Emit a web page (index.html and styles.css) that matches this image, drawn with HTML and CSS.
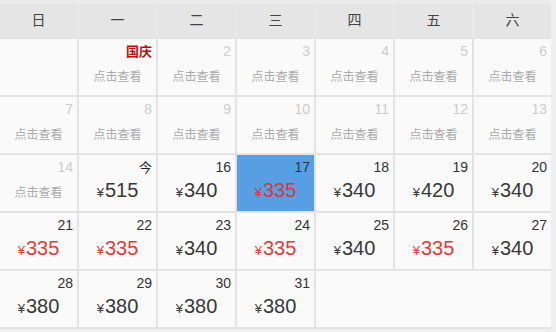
FILE: index.html
```html
<!DOCTYPE html>
<html lang="zh">
<head>
<meta charset="utf-8">
<link rel="stylesheet" href="styles.css">
</head>
<body>
<div class="cal">
  <div class="head">
    <div class="hd">日</div><div class="hd">一</div><div class="hd">二</div><div class="hd">三</div><div class="hd">四</div><div class="hd">五</div><div class="hd">六</div>
  </div>
  <div class="grid">
    <div class="cell empty"></div>
    <div class="cell off"><div class="d holiday">国庆</div><div class="v">点击查看</div></div>
    <div class="cell off"><div class="d">2</div><div class="v">点击查看</div></div>
    <div class="cell off"><div class="d">3</div><div class="v">点击查看</div></div>
    <div class="cell off"><div class="d">4</div><div class="v">点击查看</div></div>
    <div class="cell off"><div class="d">5</div><div class="v">点击查看</div></div>
    <div class="cell off"><div class="d">6</div><div class="v">点击查看</div></div>

    <div class="cell off"><div class="d">7</div><div class="v">点击查看</div></div>
    <div class="cell off"><div class="d">8</div><div class="v">点击查看</div></div>
    <div class="cell off"><div class="d">9</div><div class="v">点击查看</div></div>
    <div class="cell off"><div class="d">10</div><div class="v">点击查看</div></div>
    <div class="cell off"><div class="d">11</div><div class="v">点击查看</div></div>
    <div class="cell off"><div class="d">12</div><div class="v">点击查看</div></div>
    <div class="cell off"><div class="d">13</div><div class="v">点击查看</div></div>

    <div class="cell off"><div class="d">14</div><div class="v">点击查看</div></div>
    <div class="cell"><div class="d today">今</div><div class="p"><span class="y">¥</span>515</div></div>
    <div class="cell"><div class="d">16</div><div class="p"><span class="y">¥</span>340</div></div>
    <div class="cell sel"><div class="d">17</div><div class="p low"><span class="y">¥</span>335</div></div>
    <div class="cell"><div class="d">18</div><div class="p"><span class="y">¥</span>340</div></div>
    <div class="cell"><div class="d">19</div><div class="p"><span class="y">¥</span>420</div></div>
    <div class="cell"><div class="d">20</div><div class="p"><span class="y">¥</span>340</div></div>

    <div class="cell"><div class="d">21</div><div class="p low"><span class="y">¥</span>335</div></div>
    <div class="cell"><div class="d">22</div><div class="p low"><span class="y">¥</span>335</div></div>
    <div class="cell"><div class="d">23</div><div class="p"><span class="y">¥</span>340</div></div>
    <div class="cell"><div class="d">24</div><div class="p low"><span class="y">¥</span>335</div></div>
    <div class="cell"><div class="d">25</div><div class="p"><span class="y">¥</span>340</div></div>
    <div class="cell"><div class="d">26</div><div class="p low"><span class="y">¥</span>335</div></div>
    <div class="cell"><div class="d">27</div><div class="p"><span class="y">¥</span>340</div></div>

    <div class="cell"><div class="d">28</div><div class="p"><span class="y">¥</span>380</div></div>
    <div class="cell"><div class="d">29</div><div class="p"><span class="y">¥</span>380</div></div>
    <div class="cell"><div class="d">30</div><div class="p"><span class="y">¥</span>380</div></div>
    <div class="cell"><div class="d">31</div><div class="p"><span class="y">¥</span>380</div></div>
    <div class="cell blank wide"></div>
  </div>
</div>
</body>
</html>
```

FILE: styles.css
```css
html, body {
  margin: 0;
  padding: 0;
}
body {
  background: #efefef;
  font-family: "Liberation Sans", "Noto Sans CJK SC", sans-serif;
  width: 556px;
  height: 332px;
  overflow: hidden;
}
.cal {
  width: 551px;
  background: #e3e3e3;
  padding-bottom: 2px;
}
.head {
  display: grid;
  grid-template-columns: repeat(7, 77px);
  column-gap: 2px;
  height: 38px;
  background: #e8e8e8;
  border-top: 4px solid #ebebeb;
  box-sizing: border-box;
}
.hd {
  background: #e5e5e5;
  text-align: center;
  font-family: "Noto Sans CJK SC", sans-serif;
  font-size: 14px;
  line-height: 30px;
  color: #444;
}
.grid {
  display: grid;
  grid-template-columns: repeat(7, 77px);
  grid-auto-rows: 56px;
  gap: 2px;
  padding-top: 1px;
}
.cell {
  background: #fafafa;
  padding: 3px 4px 0 4px;
  box-sizing: border-box;
}
.wide {
  grid-column: span 3;
}
.d {
  text-align: right;
  font-size: 14px;
  line-height: 18px;
  color: #333;
}
.off .d {
  color: #ccc;
}
.d.holiday {
  color: #c20c0c;
  font-weight: bold;
  font-size: 13px;
  font-family: "Noto Sans CJK SC", sans-serif;
}
.d.today {
  font-size: 13px;
  font-family: "Noto Sans CJK SC", sans-serif;
  color: #222;
}
.v {
  margin-top: 8px;
  text-align: center;
  font-family: "Noto Sans CJK SC", sans-serif;
  font-size: 12px;
  line-height: 16px;
  color: #aaa;
}
.p {
  margin-top: 1px;
  text-align: center;
  font-size: 20px;
  line-height: 26px;
  color: #383838;
}
.p .y {
  font-size: 13px;
  margin-right: 1px;
}
.p.low {
  color: #e03b3b;
}
.sel {
  background: #589ee2;
}
.sel .p.low {
  color: #d8373d;
}
```
